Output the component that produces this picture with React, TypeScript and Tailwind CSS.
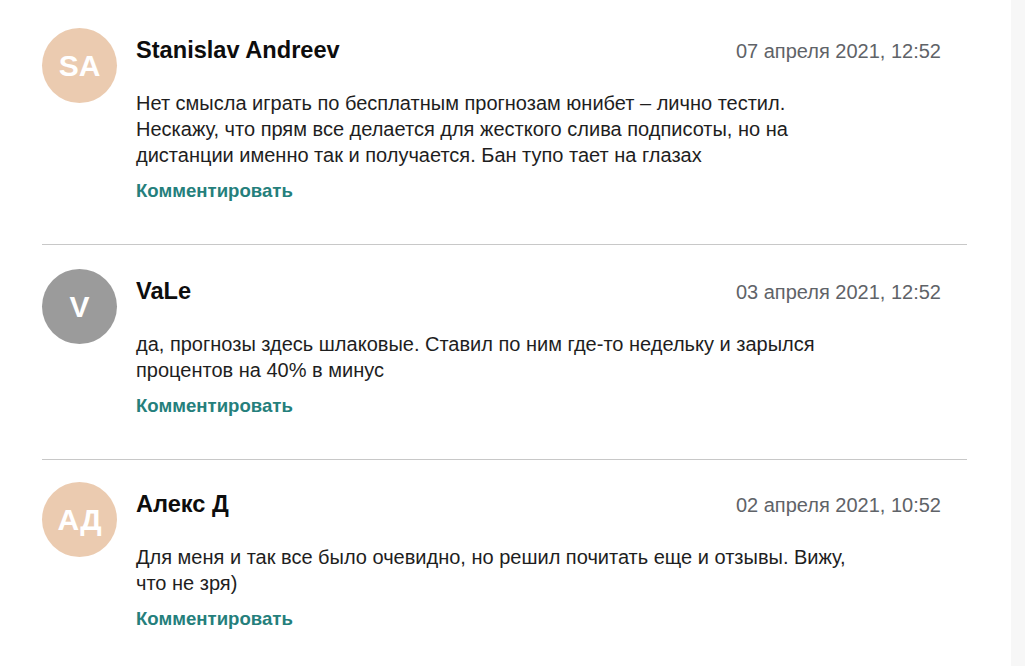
const comments = [
  {
    initials: "SA",
    avatar: "bg-[#ebcbb0]",
    name: "Stanislav Andreev",
    date: "07 апреля 2021, 12:52",
    text: "Нет смысла играть по бесплатным прогнозам юнибет – лично тестил. Нескажу, что прям все делается для жесткого слива подписоты, но на дистанции именно так и получается. Бан тупо тает на глазах",
  },
  {
    initials: "V",
    avatar: "bg-[#9b9b9b]",
    name: "VaLe",
    date: "03 апреля 2021, 12:52",
    text: "да, прогнозы здесь шлаковые. Ставил по ним где-то недельку и зарылся процентов на 40% в минус",
  },
  {
    initials: "АД",
    avatar: "bg-[#ebcbb0]",
    name: "Алекс Д",
    date: "02 апреля 2021, 10:52",
    text: "Для меня и так все было очевидно, но решил почитать еще и отзывы. Вижу, что не зря)",
  },
];

export default function App() {
  return (
    <div
      className="flex w-[1025px] h-[666px] overflow-hidden bg-white"
      style={{ fontFamily: '"Liberation Sans", Arial, sans-serif' }}
    >
      <div className="w-[1011px] pl-[42px] pr-[44px] pt-[4px]">
        {comments.map((c, i) => (
          <div
            key={i}
            className={
              i < comments.length - 1
                ? "flex gap-[19px] pt-[24px] pb-[40px] border-b border-[#c8c8c8]"
                : "flex gap-[19px] pt-[22px] pb-[40px]"
            }
          >
            <div
              className={`${c.avatar} w-[75px] h-[75px] rounded-full shrink-0 flex items-center justify-center text-white font-bold text-[30px]`}
            >
              {c.initials}
            </div>
            <div className="flex-1 min-w-0 pr-[26px]">
              <div className="flex items-baseline justify-between mt-[8px]">
                <span className="text-[23.6px] leading-[28px] font-bold text-[#0d0d0d]">
                  {c.name}
                </span>
                <span className="text-[20px] leading-[28px] text-[#5f6368]">
                  {c.date}
                </span>
              </div>
              <p className="mt-[25px] max-w-[725px] text-[20px] leading-[26px] text-[#1e1e1e]">
                {c.text}
              </p>
              <a
                href="#"
                className="block mt-[10px] text-[18.6px] leading-[26px] font-bold text-[#257f7c]"
              >
                Комментировать
              </a>
            </div>
          </div>
        ))}
      </div>
      <div className="flex-1 bg-[#f7f7f7]" />
    </div>
  );
}
